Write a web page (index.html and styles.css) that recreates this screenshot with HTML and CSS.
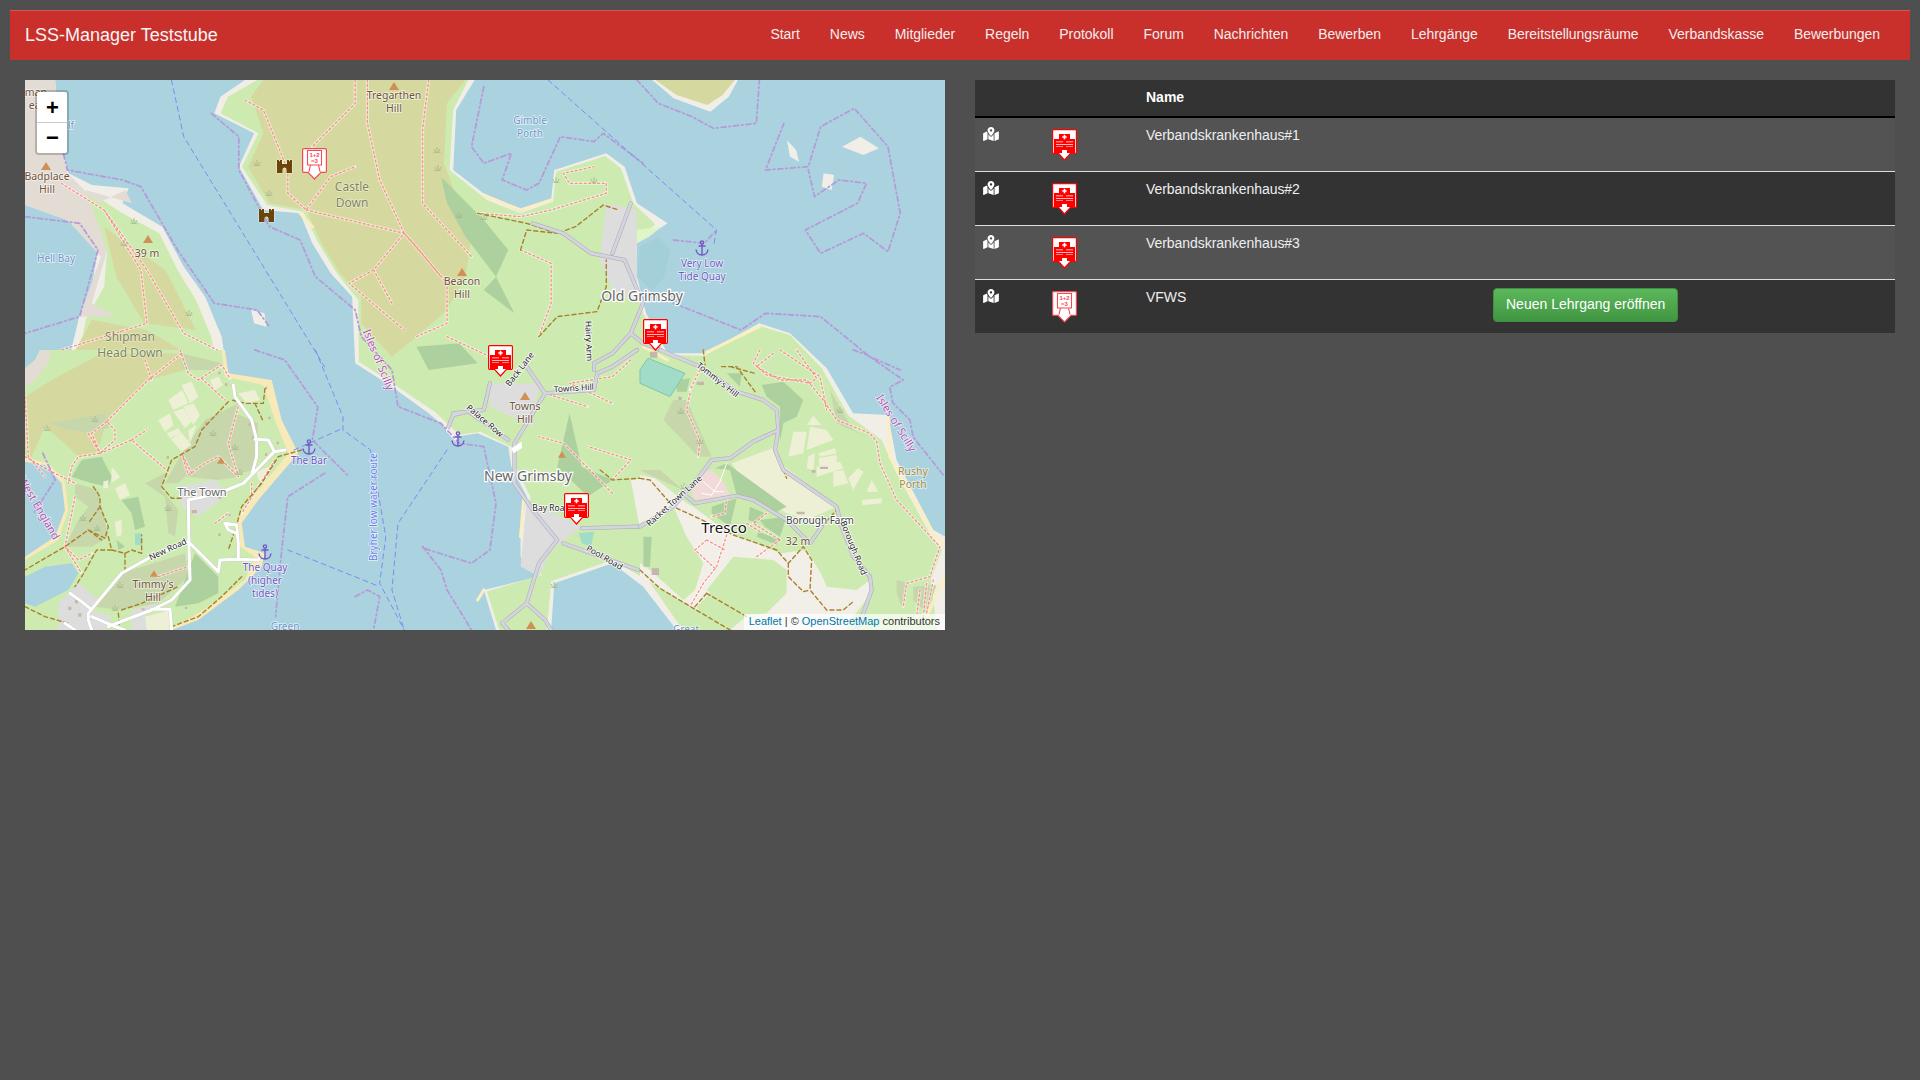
FILE: index.html
```html
<!DOCTYPE html>
<html lang="de">
<head>
    <meta charset="UTF-8">
    <title>LSS-Manager Teststube</title>
    <link rel="stylesheet" href="styles.css">
</head>
<body>
    <svg class="sprites" width="0" height="0">
        <symbol id="marker-hospital" viewBox="0 0 25 32">
            <path class="marker__pin" d="M1.5 .6H23.5A1 1 0 0 1 24.4 1.5V23.5A1 1 0 0 1 23.5 24.4H18.5L12.5 31 6.5 24.4H1.5A1 1 0 0 1 .6 23.5V1.5A1 1 0 0 1 1.5 .6Z"/>
            <path class="marker__red" d="M7 5H18V10H23V24H15V21H10V24H2V10H7Z"/>
            <path class="marker__white" d="M11.7 5.8H13.3V7.2H14.7V8.8H13.3V10.2H11.7V8.8H10.3V7.2H11.7ZM4 12.6H11V13.3H4ZM14 12.6H21V13.3H14ZM4 15H21V15.7H4ZM4 17.4H11V18.1H4ZM14 17.4H21V18.1H14ZM11 22H14V24H11Z"/>
        </symbol>
        <symbol id="icon-map" viewBox="0 0 576 512">
            <path d="M288 0c-69.59 0-126 56.41-126 126 0 56.26 82.35 158.8 113.9 196.02 6.39 7.54 17.82 7.54 24.2 0C331.65 284.8 414 182.26 414 126 414 56.41 357.59 0 288 0zm0 168c-23.2 0-42-18.8-42-42s18.8-42 42-42 42 18.8 42 42-18.8 42-42 42zM20.12 215.95A32.006 32.006 0 0 0 0 245.66v250.32c0 11.32 11.43 19.06 21.94 14.86L160 448V214.92c-8.84-15.98-16.07-31.54-21.25-46.42L20.12 215.95zM288 359.67c-14.07 0-27.38-6.18-36.51-16.96-19.66-23.2-40.57-49.62-59.49-76.72V448l192 64V265.99c-18.92 27.09-39.82 53.52-59.49 76.72-9.13 10.77-22.44 16.96-36.51 16.96zm266.06-198.51L416 224v288l139.88-55.95A31.996 31.996 0 0 0 576 426.34V176.02c0-11.32-11.43-19.06-21.94-14.86z"/>
        </symbol>
        <symbol id="anchor" viewBox="0 0 14 16">
            <path class="anchor" d="M7 4V15M3.5 6H10.5M1 9.5C1.5 13 4 15 7 15S12.5 13 13 9.5"/>
            <circle class="anchor" cx="7" cy="2.5" r="1.6"/>
        </symbol>
        <symbol id="castle" viewBox="-1 -1 17 15">
            <path class="castle" d="M0 0H2V1.2H3V0H5V4H10V0H12V1.2H13V0H15V13H9.5V9.5A2 2 0 0 0 5.5 9.5V13H0Z"/>
        </symbol>
        <symbol id="peak" viewBox="0 0 10 8">
            <path class="peak" d="M5 0 10 8H0Z"/>
        </symbol>
        <symbol id="tuft" viewBox="0 0 8 6">
            <path class="tuft" d="M4 0V6M1 2 3 6M7 2 5 6M0 6H8"/>
        </symbol>
    </svg>

    <nav class="navbar">
        <a class="navbar__brand" href="#">LSS-Manager Teststube</a>
        <ul class="navbar__nav">
            <li><a href="#">Start</a></li>
            <li><a href="#">News</a></li>
            <li><a href="#">Mitglieder</a></li>
            <li><a href="#">Regeln</a></li>
            <li><a href="#">Protokoll</a></li>
            <li><a href="#">Forum</a></li>
            <li><a href="#">Nachrichten</a></li>
            <li><a href="#">Bewerben</a></li>
            <li><a href="#">Lehrgänge</a></li>
            <li><a href="#">Bereitstellungsräume</a></li>
            <li><a href="#">Verbandskasse</a></li>
            <li><a href="#">Bewerbungen</a></li>
        </ul>
    </nav>

    <main class="content">
        <div class="map">
            <svg class="map__tiles" viewBox="25 80 920 550" width="920" height="550">
                <defs>
                    <path id="foot-lines" d="M580 30 580 100 510 230M600 30 600 160 620 330 660 490 730 640 730 760 680 800M700 30 690 180 690 400 770 560M400 90 430 120 470 300 470 370 500 420 540 320 580 290M500 420 660 490 610 600 570 640 660 780M610 600 640 700M660 490 680 530 720 620M780 430 850 440 900 420 990 370 990 340 930 340 920 310 970 290M850 540 900 580 900 700 880 800M730 800 800 860M100 340 170 420 240 600 300 790 355 840M170 420 230 600 240 760 100 840M1000 1270 920 1120 880 1100M890 970 960 1010M1030 870 1000 920 930 940 1000 1000M1000 1230 1030 1170 960 1130"/>
                    <path id="road-lines" d="M870 460 920 490 965 550 1020 570 1050 700 1030 790 1000 850 970 880 970 900M1030 790 1050 820 1078 840M950 1375 1045 1370M920 1420 1050 1505M860 890 890 970 840 1120 840 1240 870 1320 910 1410 880 1480 860 1600 820 1660 830 1680M860 1600 890 1650 900 1680M730 1080 740 1035 765 1025 830 1110M800 940 790 1020 740 1030M890 970 970 960 975 910 1000 890 1040 840M1000 550 1030 400"/>
                    <path id="sw-foot" d="M470 10 370 90 270 190 245 215 270 240 270 270 225 310 160 320 140 350 130 400M360 30 380 90M465 0 490 70 520 90 590 45 615 85M530 85 600 150M245 215 200 250 225 310M190 250 225 310M225 310 320 270 430 365M320 270 365 240M0 140 10 320 60 380M0 320 70 360 150 400M150 440 120 590 160 630 200 610M120 590 170 670M500 370 470 310 490 375 540 340 580 320 640 380M640 170 610 280 640 380M680 400 680 440M400 680 490 650M570 520 610 490M750 330 650 490"/>
                    <path id="sw-lanes" d="M625 105 630 140 680 210 695 270 695 320 680 375 655 400 605 420 540 440 490 450 492 590 495 690 440 750 380 780 300 810 250 830M495 580 580 665 585 630 640 628 640 580 635 525 600 520 610 540 635 550M640 628 700 630 705 620M690 268 730 270 748 305 780 300M748 305 680 375M490 575 380 620 290 670 190 790 190 810 200 840M135 730 170 755 195 775M200 800 270 830 300 840M380 778 435 778 440 840M120 820 150 840"/>
                    <path id="se-foot" d="M360 0 340 40 380 75 510 100 530 85 470 0M400 10 350 50 420 90 500 90 550 150 590 210 690 250 710 275 720 340 770 450 900 590 870 680 800 700 790 770M150 130 140 180 180 270 175 320M180 60 150 120M420 0 540 80 560 180M260 440 255 490 215 500M380 490 340 520 420 570M320 520 360 545M260 555 230 650 190 700 150 770M200 570 165 600 225 655M200 570 255 600M350 620 420 570M840 720 830 800M860 700 850 800M880 690 860 790"/>
                    <path id="se-roads" d="M60 0 180 50 290 125 370 150 410 180 415 240 405 300 430 360 590 470 605 530 640 620 690 680 695 720 670 790 650 840M415 240 340 275 270 325 215 330 170 390 100 470 0 530M140 440 165 460 290 437 340 450 440 510 490 560 510 580 545 530"/>
                </defs>

                <rect class="water" x="25" y="80" width="920" height="550"/>

                <!-- north and centre of the map, stretched from the crop grid -->
                <g class="geo" transform="translate(0 70) scale(.6124 .3333)">
                    <path class="shore" d="M41 30H90L100 230 112 310 150 345 210 355 200 400 265 470 300 590 335 680 362 800 366 850H115L130 735 150 650 160 540 110 450 41 405Z"/>
                    <path class="land" d="M100 345 150 370 200 430 260 490 290 600 320 690 345 800 350 850H130L140 750 170 650 175 540Z"/>
                    <path class="shore" d="M400 30H775L745 120 740 300 800 385 850 425 900 390 905 300 990 250 1020 290 1040 400 1090 460 1040 520 1040 620 1055 730 1090 850 1150 850 1240 760 1290 790 1350 895 1393 1030 1450 1035 1464 1170 1524 1380 1543 1400V1680H1105L1050 1550 1000 1480 905 1540 900 1680H810L790 1560 880 1520 850 1460 850 1380 860 1280 835 1190 830 1130 780 1090 745 1100 700 1030 640 950 580 880 575 680 540 610 510 520 490 430 430 420 390 290 415 190 350 130 360 80Z"/>
                    <path class="land" d="M420 30H765L740 120 734 300 795 390 850 430 903 395 908 305 988 258 1014 295 1034 400 1070 462 1036 520 1036 620 1050 730 1087 855 1150 857 1240 768 1290 795 1342 895 1385 1036 1440 1110 1461 1200 1518 1390 1538 1440 1520 1530 1530 1680H1115L1060 1535 1000 1470 900 1534 893 1680H815L795 1565 885 1515 858 1460 856 1380 866 1280 842 1190 836 1132 785 1085 750 1094 710 1025 645 945 586 875 585 690 550 610 520 520 495 425 436 405 395 290 422 190 360 130 372 80Z"/>
                    <path class="shore" d="M1065 30H1205L1190 80 1160 125 1100 85Z"/>
                    <path class="heath" d="M1070 30H1200L1180 75 1155 105 1105 75Z"/>
                    <path class="shore" d="M1285 210 1300 240 1305 275 1290 260ZM1375 230 1405 200 1435 235 1410 255ZM1345 310 1362 315 1358 360 1342 350ZM410 720 432 730 435 770 415 760Z"/>

                    <path class="heath" d="M410 80 430 30H760L730 100 725 280 770 500 760 620 730 720 680 800 640 860 590 760 590 680 555 610 525 520 500 420 440 400 405 290 430 190Z"/>
                    <path class="heath" d="M120 850 150 750 240 780 305 850ZM170 470 270 600 320 780 235 760 190 620Z"/>
                    <path class="rock" d="M41 30H90L100 230 110 310 160 400 205 360 215 400 140 360 175 540 150 700 190 740 130 740 165 560 110 450 41 405Z"/>
                    <path class="wood" d="M720 320 790 450 830 540 810 620 760 500 730 400ZM810 620 840 730 790 660ZM680 830 750 820 780 880 700 900ZM930 1030 950 1190 1000 1230 960 1280 910 1190Z"/>
                    <path class="bare" d="M1030 1230 1050 1225 1050 1385 1045 1375Z"/>
                    <path class="village" d="M800 940 880 940 870 1070 800 1010ZM860 1290 950 1370 900 1440 880 1520 850 1490ZM990 400 1040 420 1040 700 1000 660 980 570Z"/>
                    <path class="lagoon" d="M945 1390 970 1385 965 1430 950 1420Z"/>
                    <path class="pond" d="M1040 620 1045 530 1075 500 1095 540 1085 620 1065 660Z"/>
                    <path class="sand-fill" d="M1040 480 1080 470 1060 500 1040 520Z"/>
                    <path class="sand" d="M790 375 850 420 900 390M1050 830 1090 870M1150 850 1240 770M490 430 510 470M855 1290 850 1400M790 1560 780 1590"/>

                    <use class="foot-casing" href="#foot-lines"/>
                    <use class="foot" href="#foot-lines"/>
                    <path class="track" d="M780 430 860 460 910 490 940 470 985 405 1010 420M850 540 860 480 910 490M880 800 910 740 975 725 990 650 990 570M980 1200 1000 1230 1045 1225"/>
                    <use class="road-casing" href="#road-lines"/>
                    <use class="road" href="#road-lines"/>
                    <path class="lane" d="M730 1080 745 1110"/>
                    <path class="white-blob" d="M835 1135 852 1115 852 1135 838 1150Z"/>
                </g>

                <!-- south west: Bryher, crop grid at 3x -->
                <g class="geo" transform="translate(25 350) scale(.3333)">
                    <path class="sand-shore" d="M0 0H600L610 70 740 90 770 210 820 310 700 450 650 520 660 590 720 610 710 650 640 720 520 810 440 840H0V620L90 560 120 480 110 400 60 345 0 335Z"/>
                    <path class="land" d="M0 0H590L600 80 715 105 750 210 790 310 685 440 635 510 645 590 690 620 660 690 520 790 430 840H0V630L100 570 130 480 120 395 70 340 0 325Z"/>
                    <path class="water" d="M0 680 60 650 140 640 160 670 130 720 30 770 0 760ZM0 0H45L30 30 0 55Z"/>
                    <path class="rock" d="M45 0H78L70 40 20 100 0 110V55L30 30Z"/>
                    <path class="heath" d="M0 140 80 90 230 10H470L480 60 370 90 270 190 240 230 215 310 160 320 130 290 60 230 20 320H0Z"/>
                    <path class="scrub" d="M70 220 240 190 260 230 200 250 130 240ZM470 10 590 40 570 60 470 60ZM420 400 470 310 540 210 640 160 610 270 640 380 580 390 480 380 460 400ZM610 180 700 220 690 360 640 370 610 280ZM360 400 420 370 410 420 460 480 450 560 430 550 420 440ZM150 400 220 420 250 560 200 590 120 590 160 510 190 470 150 440ZM210 770 290 670 480 610 490 680 400 760 280 780Z"/>
                    <path class="wood" d="M140 380 170 330 230 320 260 380 250 410 200 400ZM450 770 510 610 580 680 580 730 520 760ZM290 450 340 440 360 530 330 540 320 490ZM275 570 300 590 280 600Z"/>
                    <path class="pale" d="M430 150 472 120 490 160 445 180ZM470 105 500 95 520 140 495 160ZM400 210 435 190 445 225 420 245ZM445 185 475 175 500 215 480 235ZM475 170 505 160 525 195 505 225ZM425 250 460 235 470 250 435 265ZM438 268 470 250 500 285 470 305ZM490 240 515 225 495 280ZM555 90 580 80 595 105 570 120ZM640 130 690 120 705 150 665 160ZM260 350 285 380 260 400ZM235 395 250 390 250 415 235 415ZM270 415 300 400 315 435 285 450ZM270 515 290 510 290 555 275 560ZM695 365 745 345 720 400 700 390ZM360 800 435 780 440 840H365Z"/>
                    <path class="village" d="M100 760 160 700 220 750 200 780 260 800 240 840H100ZM460 410 570 390 610 430 520 500 470 470ZM320 780 400 760 360 800 365 840H320Z"/>
                    <path class="lagoon" d="M330 550H350V585H330Z"/>
                    <path class="buildings-fill" d="M580 65h7v8h-7zM600 100h7v8h-7zM720 110h7v8h-7zM730 200h7v8h-7zM670 220h7v8h-7zM680 260h7v8h-7zM720 310h7v8h-7zM755 275h7v8h-7zM610 490h7v8h-7zM580 550h7v8h-7zM425 318h7v8h-7zM540 215h7v8h-7zM130 770h9v10h-9zM150 750h9v10h-9zM160 790h9v10h-9zM520 410h9v6h-9zM500 440h9v6h-9zM580 440h9v6h-9zM500 480h16v10h-16zM350 775h9v6h-9zM480 770h7v7h-7zM440 740h7v7h-7z"/>
                    <use class="foot-casing" href="#sw-foot"/>
                    <use class="foot" href="#sw-foot"/>
                    <path class="track" d="M610 155 530 240 510 290 440 330 410 410 440 445 470 445M720 115 715 160 660 160 620 150M690 160 715 215M830 300 760 320 710 400 650 470 635 525 610 600M650 680 590 740 520 800 440 830M205 410 225 440 225 470 250 530 240 565 190 540 120 590 0 660M190 540 230 570M225 470 190 520M250 560 260 600 300 610 320 600 350 610 350 555M260 600 215 600 170 680 150 710M300 610 300 660M0 770 60 800 130 820M280 790 285 840M290 780 350 760 460 710"/>
                    <use class="lane-casing" href="#sw-lanes"/>
                    <use class="lane" href="#sw-lanes"/>
                </g>

                <!-- south east of Tresco, crop grid at 3x -->
                <g class="geo" transform="translate(640 350) scale(.3333)">
                    <path class="bare" d="M0 375 45 385 140 460 160 470 260 545 420 610 500 600 560 700 650 700 690 680 700 720 640 800 620 840H280L0 680Z"/>
                    <path class="land" d="M0 520 100 470 140 560 190 640 165 720 130 750 30 660 0 640ZM280 620 400 630 440 660 440 730 380 790 290 800 200 720ZM510 590 590 560 660 650 690 690 650 720 560 710ZM170 770 210 730 330 790 270 840H220ZM700 700 860 680 880 840H620L690 760Z"/>
                    <path class="pale" d="M275 340 410 290 420 340 590 470 500 510 440 490 330 420ZM445 320 460 245 500 245 490 310ZM510 230 560 240 580 270 500 300ZM535 310 585 295 590 310 540 320ZM505 320 525 310 520 360 500 355ZM535 325 590 315 590 340 540 350ZM530 350 600 335 610 355 530 380ZM580 365 610 360 625 400 580 410ZM625 385 655 355 670 365 640 420ZM680 425 695 390 715 425ZM665 450 725 445 725 460 668 465ZM500 225 520 198 545 225Z"/>
                    <path class="wood" d="M365 105 430 95 490 150 470 200 430 220 420 275 420 170 380 140ZM225 355 260 340 440 470 410 485 290 435 270 360ZM330 470 375 490 350 520 325 510ZM360 510 440 500 420 560 375 530ZM355 545 420 570 410 585 350 560ZM215 470 290 445 270 530 215 490ZM10 560H35L30 650H10ZM110 90 150 85 140 125 110 125ZM260 70H305L300 110Z"/>
                    <path class="scrub" d="M100 150H140L215 320H175L70 210ZM0 360H60L130 420 40 380ZM570 120 640 240 700 270 590 220ZM770 690 805 700 785 770 770 730ZM820 710 890 705 860 790 820 750Z"/>
                    <path class="lagoon lagoon--edge" d="M25 25 135 70 90 140 0 100V60Z"/>
                    <path class="pink" d="M185 370 215 360 250 395 270 435 210 445 165 450 155 430Z"/>
                    <path class="thin-white" d="M260 340 240 395 215 435M190 395 225 425 250 425M185 430 215 435M180 60 150 120"/>
                    <path class="sand" d="M745 200 750 320 880 550 915 590M915 680 860 800"/>
                    <use class="foot-casing" href="#se-foot"/>
                    <use class="foot" href="#se-foot"/>
                    <path class="track" d="M245 50H290L345 125M270 50 345 70M190 0 195 45M0 385 30 390 100 470 165 500 280 555 410 600 445 640 490 590 515 630 510 720 560 780H610L640 755M445 640V680L490 725 510 720M0 660 60 715 160 775 270 840M200 730 165 770M200 730 320 800M430 360 440 385M545 530 590 480"/>
                    <use class="road-casing" href="#se-roads"/>
                    <use class="road" href="#se-roads"/>
                    <path class="buildings-fill" d="M170 95h22v10h-22zM35 655h22v20h-22zM30 5h22v18h-22zM470 485h24v8h-24zM540 350h24v7h-24zM515 360h12v8h-12zM115 140h10v10h-10z"/>
                </g>

                <!-- boundaries and routes lie over everything -->
                <g transform="translate(0 70) scale(.6124 .3333)">
                    <path class="boundary" d="M1040 30 1075 100 1130 140 1165 175 1235 160 1240 30M790 50 770 230 790 280 835 250 820 330 860 360 880 340 915 200 970 215 985 190 1050 280M1100 510 1150 520 1170 480M1280 160 1250 300 1320 290 1340 170 1395 115 1450 230 1470 430 1450 545 1410 490 1340 550 1315 480 1400 400 1415 340 1370 330 1330 380 1320 300M1100 700 1210 780 1250 730 1340 740 1420 860 1470 900M1393 840 1416 855 1475 930 1453 951 1458 999 1486 1050 1491 1101 1543 1221M345 130 390 200 390 300 440 470 490 510 515 620 580 720 590 800 640 900 650 1010 720 1060 750 1120 790 1130 810 1300 800 1440 770 1480 700 1440 690 1430M416 840 465 870 519 1011 510 1110 570 1220M530 1210 470 1280 460 1440 450 1640M580 1580 600 1560 620 1580 610 1680M80 70 110 300 200 330 230 350 290 540 350 700 420 720 440 770M41 440 130 460 160 540 130 740 41 790M690 1430 720 1500 730 1560 770 1680M70 1150 90 1230 55 1330"/>
                    <path class="route" d="M280 30 300 200 400 500 530 890M515 840 560 1040 560 1080 605 1140 630 1400 620 1540 660 1680M730 1140 650 1360 640 1560 660 1680M470 1440 620 1550M895 30 1170 480 1165 530M480 1140 560 1075"/>
                </g>

                <use href="#peak" x="389" y="82" width="10" height="8"/>
                <use href="#peak" x="41" y="162" width="10" height="8"/>
                <use href="#peak" x="143" y="235" width="10" height="8"/>
                <use href="#peak" x="457" y="268" width="10" height="8"/>
                <use href="#peak" x="520" y="392" width="10" height="8"/>
                <use href="#peak" x="558" y="451" width="8" height="7"/>
                <use href="#peak" x="217" y="457" width="8" height="7"/>
                <use href="#peak" x="150" y="570" width="8" height="7"/>
                <use href="#peak" x="526" y="621" width="10" height="8"/>
                <use href="#tuft" x="253" y="160" width="8" height="6"/>
                <use href="#tuft" x="265" y="190" width="8" height="6"/>
                <use href="#tuft" x="433" y="147" width="8" height="6"/>
                <use href="#tuft" x="434" y="165" width="8" height="6"/>
                <use href="#tuft" x="552" y="177" width="8" height="6"/>
                <use href="#tuft" x="590" y="177" width="8" height="6"/>
                <use href="#tuft" x="130" y="218" width="8" height="6"/>
                <use href="#tuft" x="120" y="240" width="8" height="6"/>
                <use href="#tuft" x="185" y="310" width="8" height="6"/>
                <use href="#tuft" x="455" y="212" width="8" height="6"/>
                <use href="#tuft" x="480" y="214" width="8" height="6"/>
                <use href="#tuft" x="91" y="416" width="8" height="6"/>
                <use href="#tuft" x="43" y="425" width="8" height="6"/>
                <use href="#tuft" x="209" y="430" width="8" height="6"/>
                <use href="#tuft" x="231" y="444" width="8" height="6"/>
                <use href="#tuft" x="236" y="469" width="8" height="6"/>
                <use href="#tuft" x="164" y="505" width="8" height="6"/>
                <use href="#tuft" x="93" y="525" width="8" height="6"/>
                <use href="#tuft" x="79" y="515" width="8" height="6"/>
                <use href="#tuft" x="116" y="582" width="8" height="6"/>
                <use href="#tuft" x="111" y="605" width="8" height="6"/>
                <use href="#tuft" x="677" y="408" width="8" height="6"/>
                <use href="#tuft" x="696" y="438" width="8" height="6"/>
                <use href="#tuft" x="836" y="407" width="8" height="6"/>
                <use href="#tuft" x="680" y="483" width="8" height="6"/>
                <use href="#tuft" x="550" y="582" width="8" height="6"/>
                <use href="#anchor" x="695" y="240" width="14" height="16"/>
                <use href="#anchor" x="302" y="439" width="14" height="16"/>
                <use href="#anchor" x="451" y="431" width="14" height="16"/>
                <use href="#anchor" x="258" y="544" width="14" height="16"/>
                <use href="#castle" x="276" y="159" width="17" height="15"/>
                <use href="#castle" x="258" y="208" width="17" height="15"/>

                <text class="lbl lbl--peak" x="394" y="99">Tregarthen</text>
                <text class="lbl lbl--peak" x="394" y="112">Hill</text>
                <text class="lbl lbl--peak" x="47" y="180">Badplace</text>
                <text class="lbl lbl--peak" x="47" y="193">Hill</text>
                <text class="lbl lbl--peak" x="147" y="257">39 m</text>
                <text class="lbl lbl--peak" x="462" y="285">Beacon</text>
                <text class="lbl lbl--peak" x="462" y="298">Hill</text>
                <text class="lbl lbl--peak" x="525" y="410">Towns</text>
                <text class="lbl lbl--peak" x="525" y="423">Hill</text>
                <text class="lbl lbl--peak" x="153" y="588">Timmy's</text>
                <text class="lbl lbl--peak" x="153" y="601">Hill</text>
                <text class="lbl lbl--peak" x="798" y="545">32 m</text>
                <text class="lbl lbl--peak lbl--end" x="47" y="96">oman</text>
                <text class="lbl lbl--peak lbl--end" x="47" y="109">ead</text>
                <text class="lbl lbl--heath" x="352" y="191">Castle</text>
                <text class="lbl lbl--heath" x="352" y="207">Down</text>
                <text class="lbl lbl--heath" x="130" y="341">Shipman</text>
                <text class="lbl lbl--heath" x="130" y="357">Head Down</text>
                <text class="lbl lbl--bay" x="530" y="124">Gimble</text>
                <text class="lbl lbl--bay" x="530" y="137">Porth</text>
                <text class="lbl lbl--bay" x="56" y="262">Hell Bay</text>
                <text class="lbl lbl--bay" x="285" y="630">Green</text>
                <text class="lbl lbl--bay" x="686" y="633">Great</text>
                <text class="lbl lbl--bay lbl--end" x="74" y="129">Gulf</text>
                <text class="lbl lbl--quay" x="702" y="267">Very Low</text>
                <text class="lbl lbl--quay" x="702" y="280">Tide Quay</text>
                <text class="lbl lbl--quay" x="309" y="464">The Bar</text>
                <text class="lbl lbl--quay" x="265" y="571">The Quay</text>
                <text class="lbl lbl--quay" x="265" y="584">(higher</text>
                <text class="lbl lbl--quay" x="265" y="597">tides)</text>
                <text class="lbl lbl--village" x="642" y="301">Old Grimsby</text>
                <text class="lbl lbl--village" x="528" y="481">New Grimsby</text>
                <text class="lbl lbl--hamlet" x="202" y="496">The Town</text>
                <text class="lbl lbl--farm" x="820" y="524">Borough Farm</text>
                <text class="lbl lbl--island" x="724" y="533">Tresco</text>
                <text class="lbl lbl--beach" x="913" y="475">Rushy</text>
                <text class="lbl lbl--beach" x="913" y="488">Porth</text>
                <text class="lbl lbl--ferry" transform="translate(377 507) rotate(-90)">Bryher low water route</text>
                <text class="lbl lbl--border" transform="translate(375 361) rotate(68)">Isles of Scilly</text>
                <text class="lbl lbl--border" transform="translate(893 425) rotate(58)">Isles of Scilly</text>
                <text class="lbl lbl--border" transform="translate(36 510) rotate(60)">West England</text>
                <text class="lbl lbl--road" transform="translate(586 341) rotate(88)">Hairy Arm</text>
                <text class="lbl lbl--road" transform="translate(522 371) rotate(-52)">Back Lane</text>
                <text class="lbl lbl--road" transform="translate(574 391) rotate(-4)">Towns Hill</text>
                <text class="lbl lbl--road" transform="translate(483 423) rotate(40)">Palace Row</text>
                <text class="lbl lbl--road" transform="translate(169 552) rotate(-25)">New Road</text>
                <text class="lbl lbl--road" x="551" y="511">Bay Road</text>
                <text class="lbl lbl--road" transform="translate(676 503) rotate(-42)">Racket Town Lane</text>
                <text class="lbl lbl--road" transform="translate(716 382) rotate(38)">Tommy's Hill</text>
                <text class="lbl lbl--road" transform="translate(851 549) rotate(68)">Borough Road</text>
                <text class="lbl lbl--road" transform="translate(603 560) rotate(30)">Pool Road</text>

                <svg x="302" y="148" width="25" height="32" viewBox="0 0 25 32">
                    <path class="marker__pin marker__pin--light" d="M1.5 .6H23.5A1 1 0 0 1 24.4 1.5V23.5A1 1 0 0 1 23.5 24.4H19L12.5 31 6 24.4H1.5A1 1 0 0 1 .6 23.5V1.5A1 1 0 0 1 1.5 .6Z"/>
                    <path class="marker__board" d="M5.5 2.5H19.5V17H5.5ZM8.5 17 7 23.5M16.5 17 18 23.5"/>
                    <text class="marker__sum" x="12.5" y="9">1+2</text>
                    <text class="marker__sum" x="12.5" y="15">=3</text>
                </svg>
                <use href="#marker-hospital" x="488" y="345" width="25" height="32"/>
                <use href="#marker-hospital" x="643" y="319" width="25" height="32"/>
                <use href="#marker-hospital" x="564" y="493" width="25" height="32"/>
            </svg>

            <div class="map__zoom">
                <a class="map__zoom-btn map__zoom-btn--in" href="#">+</a>
                <a class="map__zoom-btn map__zoom-btn--out" href="#">&minus;</a>
            </div>
            <div class="map__attribution">
                <a href="#">Leaflet</a> | © <a href="#">OpenStreetMap</a> contributors
            </div>
        </div>

        <div class="buildings">
            <table class="buildings__table">
                <colgroup>
                    <col class="col-map">
                    <col class="col-icon">
                    <col class="col-name">
                    <col>
                </colgroup>
                <thead>
                    <tr><th></th><th></th><th>Name</th><th></th></tr>
                </thead>
                <tbody>
                    <tr>
                        <td><svg class="icon-map"><use href="#icon-map"/></svg></td>
                        <td><svg class="marker"><use href="#marker-hospital"/></svg></td>
                        <td class="buildings__name">Verbandskrankenhaus#1</td>
                        <td></td>
                    </tr>
                    <tr>
                        <td><svg class="icon-map"><use href="#icon-map"/></svg></td>
                        <td><svg class="marker"><use href="#marker-hospital"/></svg></td>
                        <td class="buildings__name">Verbandskrankenhaus#2</td>
                        <td></td>
                    </tr>
                    <tr>
                        <td><svg class="icon-map"><use href="#icon-map"/></svg></td>
                        <td><svg class="marker"><use href="#marker-hospital"/></svg></td>
                        <td class="buildings__name">Verbandskrankenhaus#3</td>
                        <td></td>
                    </tr>
                    <tr>
                        <td><svg class="icon-map"><use href="#icon-map"/></svg></td>
                        <td>
                            <svg class="marker" viewBox="0 0 25 32">
                                <path class="marker__pin marker__pin--light" d="M1.5 .6H23.5A1 1 0 0 1 24.4 1.5V23.5A1 1 0 0 1 23.5 24.4H19L12.5 31 6 24.4H1.5A1 1 0 0 1 .6 23.5V1.5A1 1 0 0 1 1.5 .6Z"/>
                                <path class="marker__board" d="M5.5 2.5H19.5V17H5.5ZM8.5 17 7 23.5M16.5 17 18 23.5"/>
                                <text class="marker__sum" x="12.5" y="9">1+2</text>
                                <text class="marker__sum" x="12.5" y="15">=3</text>
                            </svg>
                        </td>
                        <td class="buildings__name">VFWS</td>
                        <td><a class="button" href="#">Neuen Lehrgang eröffnen</a></td>
                    </tr>
                </tbody>
            </table>
        </div>
    </main>
</body>
</html>
```

FILE: styles.css
```css
html {
    height: 100%;
}

body {
    min-height: 100%;
    margin: 0;
    background: #4f4f4f;
    color: #fff;
    font-family: "Liberation Sans", Arial, sans-serif;
    font-size: 14px;
    line-height: 20px;
}

a {
    color: inherit;
    text-decoration: none;
}

.sprites {
    position: absolute;
}

/* navbar */
.navbar {
    display: flex;
    justify-content: space-between;
    align-items: center;
    height: 49px;
    margin: 10px 10px 20px;
    padding: 0 15px;
    background: #c9302c;
    border-top: 1px solid #d9534f;
}

.navbar__brand {
    padding-bottom: 2px;
    font-size: 18px;
    line-height: 20px;
    color: #f5f5f5;
}

.navbar__nav {
    display: flex;
    gap: 30px;
    margin: 0 15px 4px 0;
    padding: 0;
    list-style: none;
    color: #eee;
    letter-spacing: -0.03px;
}

/* page columns */
.content {
    display: flex;
    gap: 30px;
    padding: 0 25px;
}

.map {
    position: relative;
    flex: 0 0 920px;
    height: 550px;
    overflow: hidden;
}

.map__tiles {
    display: block;
}

.map__zoom {
    position: absolute;
    top: 10px;
    left: 10px;
    border: 2px solid rgba(0, 0, 0, 0.2);
    border-radius: 4px;
}

.map__zoom-btn {
    display: block;
    width: 30px;
    height: 30px;
    background: #fff;
    color: #000;
    font: bold 22px/30px "Liberation Sans", Arial, sans-serif;
    text-align: center;
    text-indent: 1px;
}

.map__zoom-btn--in {
    border-bottom: 1px solid #ccc;
    border-radius: 2px 2px 0 0;
    line-height: 32px;
}

.map__zoom-btn--out {
    border-radius: 0 0 2px 2px;
}

.map__attribution {
    position: absolute;
    right: 0;
    bottom: 0;
    padding: 0 5px 1px;
    background: rgba(255, 255, 255, 0.7);
    color: #333;
    font-size: 11px;
    line-height: 15px;
}

.map__attribution a {
    color: #0078a8;
}

/* map drawing */
.map__tiles path {
    vector-effect: non-scaling-stroke;
    stroke-linejoin: round;
    stroke-linecap: round;
}

.geo {
    filter: blur(1px);
}

.water { fill: #aad3df; }
.shore { fill: #f1eee8; }
.sand-shore { fill: #f8e9b8; }
.land { fill: #cdebb0; }
.heath { fill: #d6d99f; }
.scrub { fill: #c8d7ab; }
.rock { fill: #e2dcd4; }
.wood { fill: #add19e; }
.bare { fill: #f2efe9; }
.pale { fill: #eef0d5; }
.pink { fill: #f2dad9; }
.village { fill: #dddddd; }
.lagoon { fill: #a0dcc8; }
.lagoon--edge { stroke: #7fc4ab; }
.pond { fill: #a3cfd8; }
.sand-fill { fill: #dff5c8; }
.buildings-fill { fill: #c4b6ab; }

.thin-white {
    fill: none;
    stroke: #fff;
    stroke-width: 1px;
}

.sand {
    fill: none;
    stroke: #fbeec0;
    stroke-width: 3px;
}

.foot-casing {
    fill: none;
    stroke: rgba(255, 255, 255, 0.5);
    stroke-width: 3px;
}

.foot {
    fill: none;
    stroke: #fa8f88;
    stroke-width: 1.3px;
    stroke-dasharray: 2 2.5;
}

.track {
    fill: none;
    stroke: #a9812c;
    stroke-width: 1.4px;
    stroke-dasharray: 4 3;
}

.road-casing {
    fill: none;
    stroke: #a8a8b8;
    stroke-width: 4px;
}

.road {
    fill: none;
    stroke: #d4d4de;
    stroke-width: 3px;
}

.lane-casing {
    fill: none;
    stroke: #c4c4c4;
    stroke-width: 3.6px;
}

.lane {
    fill: none;
    stroke: #fff;
    stroke-width: 3px;
}

.white-blob { fill: #fff; }

.boundary {
    fill: none;
    stroke: #b79ad9;
    stroke-width: 1.8px;
    stroke-dasharray: 5 3 1.5 3;
}

.route {
    fill: none;
    stroke: #7c8cf0;
    stroke-width: 1px;
    stroke-dasharray: 5 4;
}

.peak { fill: #d08f55; }

.tuft {
    fill: none;
    stroke: #a0b48a;
    stroke-width: 0.8px;
}

.anchor {
    fill: none;
    stroke: #7358c4;
    stroke-width: 1.4px;
}

.castle {
    fill: #6b4409;
    stroke: #fff;
    stroke-opacity: 0.6;
    stroke-width: 1px;
    paint-order: stroke;
}

.marker__pin {
    fill: #fff;
    stroke: #f00;
    stroke-width: 1.2px;
}

.marker__pin--light {
    stroke: #f44a55;
}

.marker__red { fill: #f00; }
.marker__white { fill: #fff; }

.marker__board {
    fill: none;
    stroke: #f44a55;
    stroke-width: 1.1px;
}

.marker__sum {
    fill: #f44a55;
    font: bold 6px "Liberation Sans", Arial, sans-serif;
    text-anchor: middle;
}

.lbl {
    font-family: "Noto Sans", sans-serif;
    font-size: 10px;
    text-anchor: middle;
    paint-order: stroke;
    stroke: rgba(255, 255, 255, 0.7);
    stroke-width: 1.5px;
}

.lbl--end { text-anchor: end; }
.lbl--peak { fill: #6f5238; font-size: 10.5px; }
.lbl--heath { fill: #7f8256; font-size: 12px; stroke-width: 1px; }
.lbl--bay { fill: #6e95c9; font-size: 10px; }
.lbl--quay { fill: #7358c4; font-size: 10px; }
.lbl--village { fill: #666; font-size: 14px; stroke-width: 2.5px; stroke: #fff; }
.lbl--hamlet { fill: #666; font-size: 11px; stroke: #fff; stroke-width: 2px; }
.lbl--farm { fill: #444; font-size: 10px; stroke: #fff; stroke-width: 2px; }
.lbl--island { fill: #111; font-size: 15px; stroke: #fff; stroke-width: 2px; }
.lbl--beach { fill: #a58b33; font-size: 10.5px; }
.lbl--ferry { fill: #6a7cf0; font-size: 10px; }
.lbl--border { fill: #b653b6; font-size: 11px; }
.lbl--road { fill: #222; font-size: 8.5px; stroke: #fff; stroke-width: 1.5px; }

/* buildings table */
.buildings {
    flex: 1;
}

.buildings__table {
    width: 100%;
    table-layout: fixed;
    border-collapse: collapse;
}

.col-map { width: 69px; }
.col-icon { width: 94px; }
.col-name { width: 347px; }

.buildings__table th,
.buildings__table td {
    padding: 8px;
    text-align: left;
    vertical-align: top;
}

.buildings__table th {
    padding: 7px 8px 9px;
    background: #333;
    border-bottom: 2px solid #000;
}

.buildings__table td {
    border-top: 1px solid #ddd;
}

.buildings__table td.buildings__name {
    padding-top: 7px;
    color: #eee;
    letter-spacing: -0.05px;
}

.buildings__table tbody tr:first-child td {
    border-top: 0;
}

.buildings__table tbody tr:nth-child(odd) {
    background: #535353;
}

.buildings__table tbody tr:nth-child(even) {
    background: #333;
}

.icon-map {
    display: block;
    width: 16px;
    height: 14px;
    margin-top: 1px;
    fill: #fff;
}

.marker {
    display: block;
    width: 25px;
    height: 32px;
    margin: 3px 0 2px;
}

.button {
    display: inline-block;
    padding: 5px 12px 7px;
    background: linear-gradient(to bottom, #5cb85c, #419641);
    border: 1px solid #3e8f3e;
    border-radius: 4px;
    color: #fff;
    white-space: nowrap;
}
```
